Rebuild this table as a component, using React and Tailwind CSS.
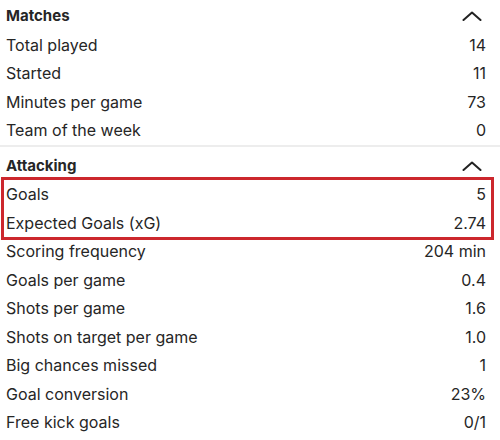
const matches = [
  ['Total played', '14'],
  ['Started', '11'],
  ['Minutes per game', '73'],
  ['Team of the week', '0'],
]

const highlighted = [
  ['Goals', '5'],
  ['Expected Goals (xG)', '2.74'],
]

const attacking = [
  ['Scoring frequency', '204 min'],
  ['Goals per game', '0.4'],
  ['Shots per game', '1.6'],
  ['Shots on target per game', '1.0'],
  ['Big chances missed', '1'],
  ['Goal conversion', '23%'],
  ['Free kick goals', '0/1'],
]

function Chevron() {
  return (
    <svg width="20" height="10" viewBox="0 0 20 10" fill="none">
      <polyline
        points="1.5,9 10,1.5 18.5,9"
        stroke="#222"
        strokeWidth="2"
        strokeLinecap="round"
        strokeLinejoin="round"
      />
    </svg>
  )
}

function Header({ title }) {
  return (
    <div className="h-[28.5px] flex items-center justify-between pl-[6px] pr-[18px]">
      <span className="font-bold text-[15px]">{title}</span>
      <Chevron />
    </div>
  )
}

function Row({ label, value }) {
  return (
    <div className="h-[28.5px] flex items-center justify-between pl-[6px] pr-[14px]">
      <span>{label}</span>
      <span>{value}</span>
    </div>
  )
}

export default function App() {
  return (
    <div
      className="w-[500px] h-[440px] bg-white text-[16px] text-[#262626] overflow-hidden pt-[2px]"
      style={{ fontFamily: 'Inter, "Liberation Sans", sans-serif' }}
    >
      <Header title="Matches" />
      {matches.map(([l, v]) => (
        <Row key={l} label={l} value={v} />
      ))}
      <div className="h-[2px] bg-[#ededed]" />
      <div className="pt-[5px]">
        <Header title="Attacking" />
        <div className="relative">
          {highlighted.map(([l, v]) => (
            <Row key={l} label={l} value={v} />
          ))}
          <div className="absolute -top-[3px] -bottom-[3px] left-[1px] right-[6px] border-[3px] border-[#cc272d]" />
        </div>
        {attacking.map(([l, v]) => (
          <Row key={l} label={l} value={v} />
        ))}
      </div>
    </div>
  )
}
